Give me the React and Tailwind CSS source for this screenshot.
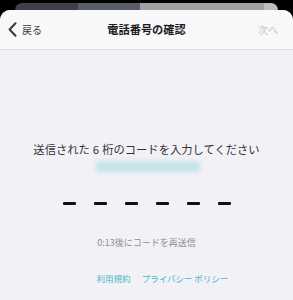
import React from 'react';

const jp = { fontFamily: '"Noto Sans CJK JP", "Noto Sans", sans-serif' };

function Dash() {
  return <div className="w-[13px] h-[3px] bg-[#111] rounded-[1px]" />;
}

export default function App() {
  return (
    <div className="w-[293px] h-[300px] bg-black flex flex-col overflow-hidden" style={jp}>
      {/* card behind the sheet */}
      <div className="h-[10px] px-[15px] pt-[3px] flex">
        <div className="flex-1 flex rounded-t-[8px] overflow-hidden">
          <div className="w-[63px] bg-[#3d4049]" />
          <div className="w-[62px] bg-[#595d68]" />
          <div className="flex-1 bg-[#a1a1a1]" />
          <div className="w-[14px] bg-[#bdbdbd]" />
        </div>
      </div>

      {/* sheet */}
      <div className="flex-1 flex flex-col rounded-t-[10px] overflow-hidden bg-[#f2f1f6]">
        <div className="h-[40px] bg-[#f8f8f9] border-b border-[#dcdce0] flex items-center px-[8px]">
          <div className="w-[80px] flex items-center gap-[5px]">
            <svg width="9" height="15" viewBox="0 0 9 15" fill="none">
              <path d="M7.5 1.2 L1.6 7.5 L7.5 13.8" stroke="#3a3a3c" strokeWidth="2" strokeLinecap="round" strokeLinejoin="round" />
            </svg>
            <span className="text-[10px] text-[#3a3a3c]">戻る</span>
          </div>
          <div className="flex-1 text-center text-[11.2px] font-bold text-[#1c1c1e]">電話番号の確認</div>
          <div className="w-[80px] flex justify-end pr-[7px]">
            <span className="text-[10px] text-[#c4c4c8]">次へ</span>
          </div>
        </div>

        <div className="flex flex-col items-center pt-[91px]">
          <p className="text-[11.3px] leading-[16px] text-[#333336] whitespace-nowrap flex gap-[3px]">
            <span>送信された</span>
            <span>6</span>
            <span>桁のコードを入力してください</span>
          </p>
          <div className="mt-[4px] w-[104px] h-[11px] bg-[#c3e4e9] rounded-[3px] blur-[2px] ml-[2px]" />
          <div className="mt-[30px] flex gap-[18px] ml-[1px]">
            <Dash />
            <Dash />
            <Dash />
            <Dash />
            <Dash />
            <Dash />
          </div>
          <p className="mt-[32px] text-[9px] leading-[12px] text-[#8e8e93] whitespace-nowrap">
            0:13後にコードを再送信
          </p>
          <div className="mt-[23px] flex gap-[11px] text-[8.5px] leading-[12px] text-[#43b9c7] whitespace-nowrap ml-[32px]">
            <span>利用規約</span>
            <span>プライバシー ポリシー</span>
          </div>
        </div>
      </div>
    </div>
  );
}
